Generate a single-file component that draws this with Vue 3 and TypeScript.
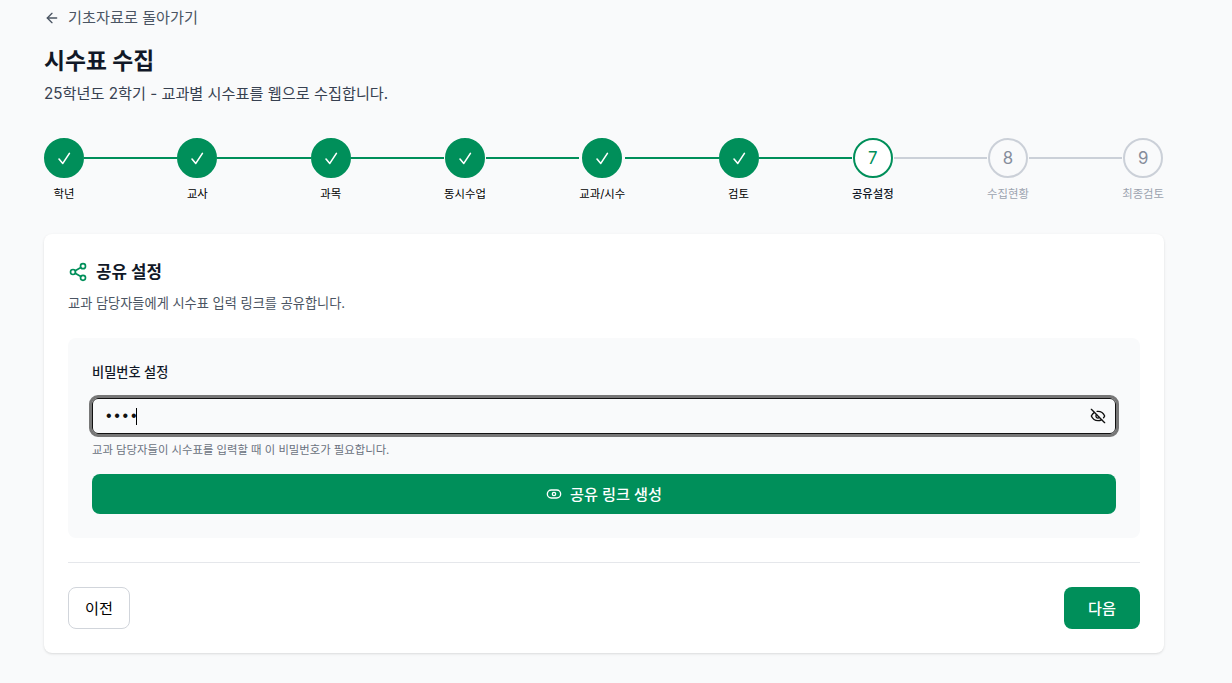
<script setup lang="ts">
import { ref } from 'vue'

interface Step { label: string; state: 'done' | 'active' | 'todo'; num: number }
const labels = ['학년', '교사', '과목', '동시수업', '교과/시수', '검토', '공유설정', '수집현황', '최종검토']
const steps = ref<Step[]>(labels.map((label, i) => ({
  label,
  num: i + 1,
  state: i < 6 ? 'done' : i === 6 ? 'active' : 'todo',
})))
</script>

<template>
  <div class="page">
    <a class="back">
      <svg width="16" height="16" viewBox="0 0 24 24" fill="none" stroke="currentColor" stroke-width="2" stroke-linecap="round" stroke-linejoin="round"><path d="M19 12H5" /><path d="M12 19l-7-7 7-7" /></svg>
      <span>기초자료로 돌아가기</span>
    </a>
    <h1>시수표 수집</h1>
    <p class="sub">25학년도 2학기 - 교과별 시수표를 웹으로 수집합니다.</p>

    <div class="stepper">
      <template v-for="(s, i) in steps" :key="s.num">
        <div class="step" :class="s.state">
          <div class="circle">
            <svg v-if="s.state === 'done'" width="16" height="16" viewBox="0 0 16 16" fill="none" stroke="currentColor" stroke-width="1.6" stroke-linecap="round" stroke-linejoin="round"><path d="M3 9l3.8 4.4L13.4 3.4" /></svg>
            <span v-else>{{ s.num }}</span>
          </div>
          <div class="label">{{ s.label }}</div>
        </div>
        <div v-if="i < steps.length - 1" class="line" :class="{ on: i < 6 }"></div>
      </template>
    </div>

    <section class="card">
      <div class="title">
        <svg width="20" height="20" viewBox="0 0 24 24" fill="none" stroke="#008f5a" stroke-width="2" stroke-linecap="round" stroke-linejoin="round"><circle cx="18" cy="5" r="3" /><circle cx="6" cy="12" r="3" /><circle cx="18" cy="19" r="3" /><path d="M8.59 13.51l6.83 3.98" /><path d="M15.41 6.51l-6.82 3.98" /></svg>
        <h2>공유 설정</h2>
      </div>
      <p class="desc">교과 담당자들에게 시수표 입력 링크를 공유합니다.</p>

      <div class="panel">
        <div class="field-label">비밀번호 설정</div>
        <div class="input">
          <span class="dots">••••</span><span class="caret"></span>
          <svg class="eye" width="16" height="16" viewBox="0 0 24 24" fill="none" stroke="currentColor" stroke-width="2" stroke-linecap="round" stroke-linejoin="round"><path d="M9.88 9.88a3 3 0 1 0 4.24 4.24" /><path d="M10.73 5.08A10.43 10.43 0 0 1 12 5c7 0 10 7 10 7a13.16 13.16 0 0 1-1.67 2.68" /><path d="M6.61 6.61A13.526 13.526 0 0 0 2 12s3 7 10 7a9.74 9.74 0 0 0 5.39-1.61" /><path d="M2 2l20 20" /></svg>
        </div>
        <p class="hint">교과 담당자들이 시수표를 입력할 때 이 비밀번호가 필요합니다.</p>
        <button class="generate">
          <svg width="16" height="16" viewBox="0 0 24 24" fill="none" stroke="currentColor" stroke-width="2" stroke-linecap="round" stroke-linejoin="round"><rect x="2" y="6" width="20" height="12" rx="6" /><circle cx="12" cy="12" r="2.5" /></svg>
          <span class="lift">공유 링크 생성</span>
        </button>
      </div>

      <div class="actions">
        <button class="btn prev"><span class="lift">이전</span></button>
        <button class="btn next"><span class="lift">다음</span></button>
      </div>
    </section>
  </div>
</template>

<style scoped>
.page {
  box-sizing: border-box;
  width: 1232px;
  height: 683px;
  overflow: hidden;
  padding: 8px 68px 0 44px;
  background: #f9fafb;
  font-family: Inter, "Noto Sans CJK KR", sans-serif;
  color: #111827;
}
.back {
  display: flex;
  align-items: center;
  gap: 8px;
  height: 20px;
  font-size: 15.2px;
  line-height: 20px;
  color: #4b5563;
}
h1 {
  margin: 17px 0 0;
  font-size: 22.8px;
  line-height: 32px;
  font-weight: 700;
  color: #111827;
}
.sub {
  margin: 7px 0 0;
  font-size: 15.2px;
  line-height: 20px;
  color: #374151;
}
.stepper {
  display: flex;
  align-items: flex-start;
  margin-top: 34px;
}
.step {
  display: flex;
  flex-direction: column;
  align-items: center;
  flex: none;
}
.circle {
  box-sizing: border-box;
  width: 40px;
  height: 40px;
  border-radius: 50%;
  display: flex;
  align-items: center;
  justify-content: center;
  font-size: 16.8px;
  font-weight: 400;
  border: 2px solid #cbd0d8;
  color: #868d9b;
  background: #f9fafb;
}
.step.done .circle {
  background: #008f5a;
  border-color: #008f5a;
  color: #fff;
}
.step.active .circle {
  border-color: #008f5a;
  color: #008f5a;
  background: #fff;
}
.label {
  margin-top: 8px;
  font-size: 11.36px;
  line-height: 16px;
  font-weight: 400;
  white-space: nowrap;
  color: #000;
}
.step.active .label { font-weight: 500; color: #111827; }
.step.todo .label { color: #9ca3af; }
.line {
  flex: 1;
  height: 2px;
  margin-top: 19px;
  background: #cbd0d8;
}
.line.on { background: #008f5a; }
.card {
  margin-top: 32px;
  height: 419px;
  box-sizing: border-box;
  padding: 25px 24px 24px;
  background: #fff;
  border-radius: 8px;
  box-shadow: 0 1px 3px rgba(0, 0, 0, 0.1), 0 1px 2px -1px rgba(0, 0, 0, 0.1);
}
.title {
  display: flex;
  align-items: center;
  gap: 8px;
  height: 26px;
}
.title svg { width: 20px; height: 20px; }
h2 {
  margin: 0;
  font-size: 16.8px;
  line-height: 26px;
  font-weight: 600;
  color: #111827;
}
.desc {
  margin: 8px 0 0;
  font-size: 13.2px;
  line-height: 20px;
  color: #4b5563;
}
.panel {
  margin-top: 25px;
  padding: 24px;
  height: 200px;
  box-sizing: border-box;
  background: #f9fafb;
  border-radius: 8px;
}
.field-label {
  font-size: 13.2px;
  line-height: 20px;
  font-weight: 500;
  color: #111827;
}
.input {
  box-sizing: border-box;
  margin-top: 16px;
  height: 36px;
  display: flex;
  align-items: center;
  padding: 0 9px 0 13px;
  border-radius: 6px;
  border: 1px solid #111;
  outline: 3px solid #777;
  outline-offset: 0;
  background: #f9fafb;
  color: #111;
  font-size: 16px;
}
.dots { font-family: "Liberation Sans", sans-serif; letter-spacing: 2.7px; }
.caret {
  width: 1px;
  height: 17px;
  margin-left: -3.7px;
  background: #000;
}
.eye { margin-left: auto; }
.hint {
  margin: 8px 0 0;
  font-size: 11.36px;
  line-height: 16px;
  color: #6b7280;
}
.generate {
  margin-top: 16px;
  width: 100%;
  height: 40px;
  border: 0;
  border-radius: 8px;
  background: #008f5a;
  color: #fff;
  font: inherit;
  font-size: 15.2px;
  font-weight: 500;
  display: flex;
  align-items: center;
  justify-content: center;
  gap: 8px;
}
.lift {
  display: block;
  margin-bottom: 2px;
}
.actions {
  margin-top: 24px;
  padding-top: 24px;
  border-top: 1px solid #e5e7eb;
  display: flex;
  justify-content: space-between;
}
.btn {
  height: 42px;
  border-radius: 8px;
  font: inherit;
  font-size: 15.2px;
  font-weight: 400;
  padding: 0 16px;
}
.btn .lift { margin-bottom: 3px; }
.prev {
  background: #fff;
  border: 1px solid #d1d5db;
  color: #000;
}
.next {
  background: #008f5a;
  border: 0;
  color: #fff;
  padding: 0 24px;
  font-weight: 500;
}
</style>
